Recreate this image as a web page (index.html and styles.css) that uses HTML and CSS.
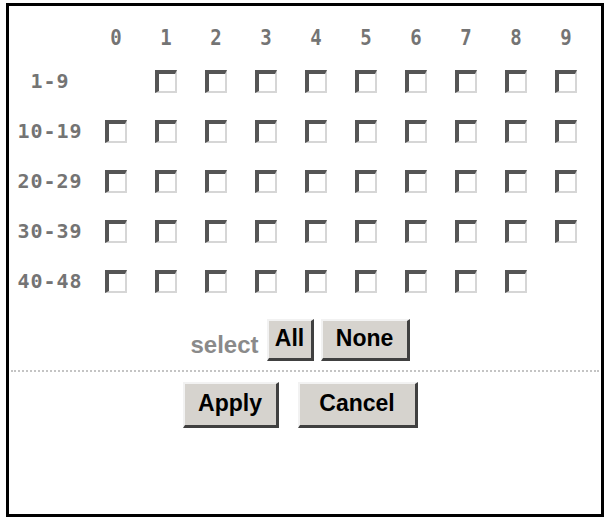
FILE: index.html
```html
<!DOCTYPE html>
<html lang="en">
<head>
    <meta charset="UTF-8">
    <title>Port selection</title>
<link rel="stylesheet" href="styles.css">
</head>
<body>
    <div class="frame">
        <div class="ports" id="ports">
            <span></span>
            <span class="head">0</span><span class="head">1</span><span class="head">2</span>
            <span class="head">3</span><span class="head">4</span><span class="head">5</span>
            <span class="head">6</span><span class="head">7</span><span class="head">8</span>
            <span class="head">9</span>
        </div>

        <div class="select-row">
            <span class="select-label">select</span>
            <button class="btn btn-all" id="all">All</button>
            <button class="btn btn-none" id="none">None</button>
        </div>

        <div class="divider"></div>

        <div class="action-row">
            <button class="btn btn-apply">Apply</button>
            <button class="btn btn-cancel">Cancel</button>
        </div>
    </div>

<script>
document.addEventListener('DOMContentLoaded', function () {
    const grid = document.getElementById('ports');
    const rows = [
        { label: '1-9', from: 1, to: 9 },
        { label: '10-19', from: 10, to: 19 },
        { label: '20-29', from: 20, to: 29 },
        { label: '30-39', from: 30, to: 39 },
        { label: '40-48', from: 40, to: 48 }
    ];

    rows.forEach(row => {
        const label = document.createElement('span');
        label.className = 'label';
        label.textContent = row.label;
        grid.appendChild(label);

        const base = Math.floor(row.from / 10) * 10;
        for (let i = 0; i < 10; i++) {
            const port = base + i;
            const cell = document.createElement('span');
            if (port >= row.from && port <= row.to) {
                const box = document.createElement('input');
                box.type = 'checkbox';
                box.className = 'box';
                box.value = port;
                cell.appendChild(box);
            }
            grid.appendChild(cell);
        }
    });

    function setAll(checked) {
        grid.querySelectorAll('.box').forEach(box => { box.checked = checked; });
    }

    document.getElementById('all').onclick = () => setAll(true);
    document.getElementById('none').onclick = () => setAll(false);
});
</script>
</body>
</html>
```

FILE: styles.css
```css
* {
    box-sizing: border-box;
}

body {
    margin: 0;
    padding: 3px 0 0 6px;
    background-color: #fff;
}

.frame {
    width: 598px;
    height: 514px;
    border: 3px solid #000;
    padding-top: 12px;
}

.ports {
    display: grid;
    grid-template-columns: 82px repeat(10, 50px);
    grid-template-rows: 38px repeat(5, 50px);
    align-items: center;
    justify-items: center;
    font-family: "DejaVu Sans Mono", "Liberation Mono", monospace;
    font-weight: bold;
    color: #747474;
}

.head {
    font-size: 19px;
    transform: scaleY(1.1);
}

.label {
    font-size: 20px;
    letter-spacing: 1px;
}

.box {
    appearance: none;
    display: block;
    width: 22px;
    height: 23px;
    margin: 0;
    background-color: #fff;
    border-style: solid;
    border-width: 4px 2px 2px 4px;
    border-color: #555 #d6d6d6 #d6d6d6 #555;
    cursor: pointer;
}

.box:checked {
    background: #fff radial-gradient(circle, #333 35%, transparent 40%);
}

.select-row,
.action-row {
    width: 582px;
    display: flex;
    justify-content: center;
    align-items: center;
    font-family: "Liberation Sans", Arial, sans-serif;
    font-weight: bold;
}

.select-row {
    margin-top: 13px;
    gap: 7px;
}

.select-label {
    font-size: 24px;
    color: #8a8a8a;
    margin-right: 1px;
    padding-top: 9px;
}

.action-row {
    margin-top: 10px;
    gap: 19px;
}

.btn {
    font-family: "Liberation Sans", Arial, sans-serif;
    font-weight: bold;
    font-size: 23px;
    color: #000;
    background-color: #d6d3ce;
    border-style: solid;
    border-width: 2px 3px 3px 2px;
    border-color: #f2f2f2 #404040 #404040 #f2f2f2;
    padding: 0 0 2px;
    cursor: pointer;
}

.btn-all { width: 47px; height: 42px; }
.btn-none { width: 89px; height: 42px; }
.btn-apply { width: 96px; height: 46px; }
.btn-cancel { width: 120px; height: 46px; }

.divider {
    margin: 9px 2px 0;
    border-top: 2px dotted #c4c4c4;
}
```
